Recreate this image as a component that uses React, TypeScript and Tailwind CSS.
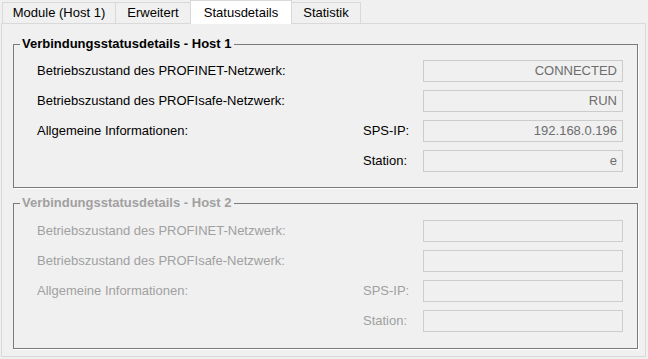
const TABS = ["Module (Host 1)", "Erweitert", "Statusdetails", "Statistik"];
const TAB_WIDTHS = ["w-[113px]", "w-[75px]", "w-[102px]", "w-[69px]"];
const ACTIVE = 2;

interface GroupProps {
  title: string;
  values: string[];
  disabled?: boolean;
  className?: string;
}

function StatusGroup({ title, values, disabled, className }: GroupProps) {
  const text = disabled ? "text-[#a0a0a0]" : "text-black";
  const rows = [
    { label: "Betriebszustand des PROFINET-Netzwerk:", sub: "" },
    { label: "Betriebszustand des PROFIsafe-Netzwerk:", sub: "" },
    { label: "Allgemeine Informationen:", sub: "SPS-IP:" },
    { label: "", sub: "Station:" },
  ];

  return (
    <div
      className={`relative ml-[11px] w-[625px] border border-[#7a7a7a] shadow-[1px_1px_0_#ffffff] ${className ?? ""}`}
    >
      <span
        className={`absolute left-[6px] top-[-9px] bg-[#f0f0f0] px-[2px] text-[13px] font-bold leading-[16px] ${text}`}
      >
        {title}
      </span>
      <div className="flex flex-col gap-[8px]">
        {rows.map((row, i) => (
          <div
            key={i}
            className={`grid h-[22px] grid-cols-[326px_60px_200px] items-center pl-[23px] text-[13px] leading-[16px] ${text}`}
          >
            <span>{row.label}</span>
            <span>{row.sub}</span>
            <div
              className={`flex h-[22px] items-center justify-end border bg-[#f0f0f0] pr-[5px] text-[13px] text-[#6d6d6d] ${
                disabled ? "border-[#cdcdcd]" : "border-[#cccccc]"
              }`}
            >
              {values[i]}
            </div>
          </div>
        ))}
      </div>
    </div>
  );
}

export default function App() {
  return (
    <div
      className="h-[359px] w-[648px] bg-[#f0f0f0] text-black"
      style={{ fontFamily: '"Liberation Sans", Arial, sans-serif' }}
    >
      <div className="flex h-[23px] items-end pl-[2px]">
        {TABS.map((tab, i) => (
          <div
            key={tab}
            className={`flex items-center justify-center border-l border-t border-[#d9d9d9] text-[13px] leading-[16px] ${
              TAB_WIDTHS[i]
            } ${i === TABS.length - 1 || i === ACTIVE ? "border-r" : ""} ${
              i === ACTIVE
                ? "relative z-10 -mb-[1px] h-[24px] bg-white"
                : "h-[21px] bg-[#f0f0f0]"
            } ${i === ACTIVE + 1 ? "border-l-0" : ""}`}
          >
            {tab}
          </div>
        ))}
      </div>
      <div className="ml-[1px] h-[334px] w-[645px] border border-[#d9d9d9] bg-[#f0f0f0]">
        <StatusGroup
          title="Verbindungsstatusdetails - Host 1"
          values={["CONNECTED", "RUN", "192.168.0.196", "e"]}
          className="mt-[20px] h-[144px] pt-[15px]"
        />
        <StatusGroup
          title="Verbindungsstatusdetails - Host 2"
          values={["", "", "", ""]}
          disabled
          className="mt-[15px] h-[146px] pt-[16px]"
        />
      </div>
    </div>
  );
}
